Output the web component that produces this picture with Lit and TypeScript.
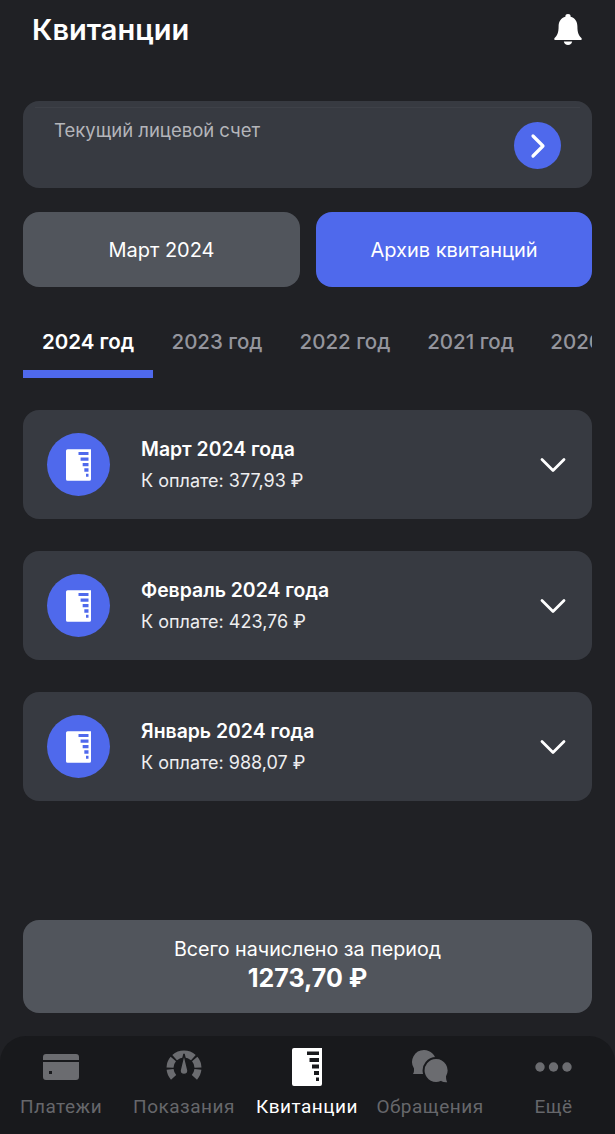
import { LitElement, html, css, svg } from "lit";
import { customElement } from "lit/decorators.js";

const receipt = (cls: string) => html`<svg class=${cls} viewBox="0 0 30 38"><path fill="#fff" fill-rule="evenodd" d="M2 0H30V36a2 2 0 0 1-2 2H2a2 2 0 0 1-2-2V2a2 2 0 0 1 2-2ZM15 3.500V7H27V3.500ZM17.500 10V14H27V10ZM20 16.500V20.500H27V16.500ZM22 23V27H27V23ZM24 29.500V33H27V29.500Z"/></svg>`;

const months = [
  { t: "Март 2024 года", s: "К оплате: 377,93 ₽" },
  { t: "Февраль 2024 года", s: "К оплате: 423,76 ₽" },
  { t: "Январь 2024 года", s: "К оплате: 988,07 ₽" },
];

const arc = (a0: number, a1: number) => {
  const cx = 19, cy = 18, r = 14;
  const p = (a: number) => {
    const t = (a * Math.PI) / 180;
    return `${(cx + r * Math.sin(t)).toFixed(2)} ${(cy - r * Math.cos(t)).toFixed(2)}`;
  };
  return svg`<path d="M${p(a0)}A${r} ${r} 0 0 1 ${p(a1)}"/>`;
};

@customElement("app-root")
export class AppRoot extends LitElement {
  static styles = css`
    :host { display: block; width: 615px; height: 1134px; overflow: hidden; background: #202125; color: #fff; font-family: "Inter", "Noto Sans", sans-serif; position: relative; }
    .page { display: flex; flex-direction: column; height: 1134px; box-sizing: border-box; }
    .head { height: 60px; padding: 0 32px; display: flex; align-items: center; justify-content: space-between; box-sizing: border-box; }
    h1 { font-size: 29px; line-height: 32px; font-weight: 600; margin: 0; }
    .bell { width: 28px; height: 32px; margin-right: 1px; }
    .content { padding: 41px 23px 0; display: flex; flex-direction: column; flex: 1; }
    .account { height: 87px; border-radius: 16px; background: #373a41; position: relative; box-sizing: border-box; padding: 18px 31px; display: flex; justify-content: space-between; }
    .account::before { content: ""; position: absolute; left: 12px; right: 12px; top: 6px; height: 1px; background: #3e4148; }
    .account .lbl { font-size: 18.500px; line-height: 22px; color: #b4b5ba; font-weight: 400; }
    .go { width: 47px; height: 47px; border-radius: 50%; background: #4f69ec; display: flex; align-items: center; justify-content: center; margin: 3px 0 0; }
    .go svg { width: 20px; height: 26px; }
    .btns { display: grid; grid-template-columns: 277px 276px; gap: 16px; margin-top: 24px; }
    .btn { height: 75px; border-radius: 16px; display: flex; align-items: center; justify-content: center; font-size: 20px; font-weight: 400; }
    .gray { background: #51555c; }
    .blue { background: #4f69ec; }
    .tabs { display: flex; overflow: hidden; margin-top: 38px; width: 569px; }
    .tab { flex: none; box-sizing: border-box; height: 53px; display: flex; align-items: flex-start; justify-content: center; padding-top: 3px; font-size: 20.500px; line-height: 28px; color: #94959d; font-weight: 500; border-bottom: 8px solid transparent; }
    .tab.on { color: #fff; font-weight: 600; border-bottom-color: #4f69ec; }
    .list { display: flex; flex-direction: column; gap: 32px; margin-top: 32px; }
    .card { height: 109px; border-radius: 16px; background: #373a41; display: flex; align-items: center; padding: 0 26px 0 24px; }
    .ic { flex: none; width: 63px; height: 63px; border-radius: 50%; background: #4f69ec; display: flex; align-items: center; justify-content: center; }
    .ic-doc { width: 25px; height: 32px; }
    .txt { flex: 1; margin-left: 31px; display: flex; flex-direction: column; gap: 7px; }
    .t { font-size: 19.400px; line-height: 25px; font-weight: 600; }
    .s { font-size: 18px; line-height: 24px; font-weight: 400; color: #eeeef0; }
    .chev { width: 26px; height: 16px; }
    .total { margin-top: auto; margin-bottom: 23px; height: 93px; box-sizing: border-box; padding-bottom: 3px; border-radius: 16px; background: #51555c; display: flex; flex-direction: column; align-items: center; justify-content: center; }
    .total .a { font-size: 19.700px; line-height: 26px; }
    .total .b { font-size: 25px; line-height: 32px; font-weight: 700; }
    nav { height: 98px; flex: none; background: #18191c; border-radius: 26px 26px 0 0; display: grid; grid-template-columns: 122px 124px 122px 124px 123px; font-family: "Roboto", sans-serif; }
    .item { display: flex; flex-direction: column; align-items: center; color: #66676b; font-size: 19px; letter-spacing: 0.500px; }
    .item.on { color: #fff; }
    .slot { height: 56px; margin-top: 3px; display: flex; align-items: center; justify-content: center; }
    .lab { line-height: 24px; white-space: nowrap; }
    .nic { fill: #6b6c70; }
    .gauge { fill: none; stroke: #6b6c70; stroke-width: 7; }
    .needle { fill: #6b6c70; stroke: #18191c; stroke-width: 1.500; }
    .bubble-front { stroke: #18191c; stroke-width: 2; }
    .doc-nav { width: 30px; height: 38px; }
  `;

  render() {
    const tabs: [string, number][] = [["2024 год", 130], ["2023 год", 128], ["2022 год", 128], ["2021 год", 123], ["2020 год", 128]];
    return html`<div class="page">
      <div class="head">
        <h1>Квитанции</h1>
        <svg class="bell" viewBox="0 0 28 32"><path fill="#fff" d="M14 0a2.600 2.600 0 0 1 2.600 2.800C21 4 23.400 7.600 23.400 12.500c0 6 1.200 9 4 11.600.7.700.3 2-.8 2H1.400c-1.100 0-1.500-1.300-.8-2 2.800-2.600 4-5.600 4-11.600 0-4.900 2.400-8.500 6.800-9.700A2.600 2.600 0 0 1 14 0Z"/><path fill="#fff" d="M9.800 27.600h8.400A4.300 4.300 0 0 1 14 31a4.300 4.300 0 0 1-4.200-3.400Z"/></svg>
      </div>
      <div class="content">
        <div class="account">
          <div class="lbl">Текущий лицевой счет</div>
          <div class="go"><svg viewBox="0 0 20 26"><path d="M5 3 15 13 5 23" fill="none" stroke="#fff" stroke-width="3.200" stroke-linecap="round" stroke-linejoin="round"/></svg></div>
        </div>
        <div class="btns"><div class="btn gray">Март 2024</div><div class="btn blue">Архив квитанций</div></div>
        <div class="tabs">
          ${tabs.map(([n, w], i) => html`<div class="tab ${i === 0 ? "on" : ""}" style="width:${w}px">${n}</div>`)}
        </div>
        <div class="list">
          ${months.map((m) => html`<div class="card">
            <div class="ic">${receipt("ic-doc")}</div>
            <div class="txt"><div class="t">${m.t}</div><div class="s">${m.s}</div></div>
            <svg class="chev" viewBox="0 0 26 16"><path d="M2 2.500 13 13.500 24 2.500" fill="none" stroke="#fff" stroke-width="2.800" stroke-linecap="round" stroke-linejoin="round"/></svg>
          </div>`)}
        </div>
        <div class="total"><div class="a">Всего начислено за период</div><div class="b">1273,70 ₽</div></div>
      </div>
      <nav>
        <div class="item"><div class="slot"><svg class="nic" width="36" height="26" viewBox="0 0 36 26"><path fill-rule="evenodd" d="M3 0H33a3 3 0 0 1 3 3V6H0V3a3 3 0 0 1 3-3ZM0 8H36V23a3 3 0 0 1-3 3H3a3 3 0 0 1-3-3ZM6 17v3h3v-3Z"/></svg></div><div class="lab">Платежи</div></div>
        <div class="item"><div class="slot"><svg width="38" height="34" viewBox="0 0 38 34"><g class="gauge">${arc(-132, -96)}${arc(-88, -50)}${arc(-42, 42)}${arc(50, 88)}${arc(96, 132)}</g><path class="needle" d="M19 4 23 20.500a4 4 0 1 1-8 0Z"/></svg></div><div class="lab">Показания</div></div>
        <div class="item on"><div class="slot">${receipt("doc-nav")}</div><div class="lab">Квитанции</div></div>
        <div class="item"><div class="slot"><svg class="nic" width="38" height="34" viewBox="0 0 38 34"><path d="M13 0a12 12 0 0 1 0 24H2c1-1.500 1-3 1-5.500A12 12 0 0 1 13 0Z"/><path class="bubble-front" d="M25 8a12.500 12.500 0 1 0 5 24c2 1.300 5 1.500 8 1-1.500-1.500-2-3.500-2-6.500A12.500 12.500 0 0 0 25 8Z"/></svg></div><div class="lab">Обращения</div></div>
        <div class="item"><div class="slot"><svg class="nic" width="37" height="10" viewBox="0 0 37 10"><circle cx="5" cy="5" r="4.700"/><circle cx="18.500" cy="5" r="4.700"/><circle cx="32" cy="5" r="4.700"/></svg></div><div class="lab">Ещё</div></div>
      </nav>
    </div>`;
  }
}
